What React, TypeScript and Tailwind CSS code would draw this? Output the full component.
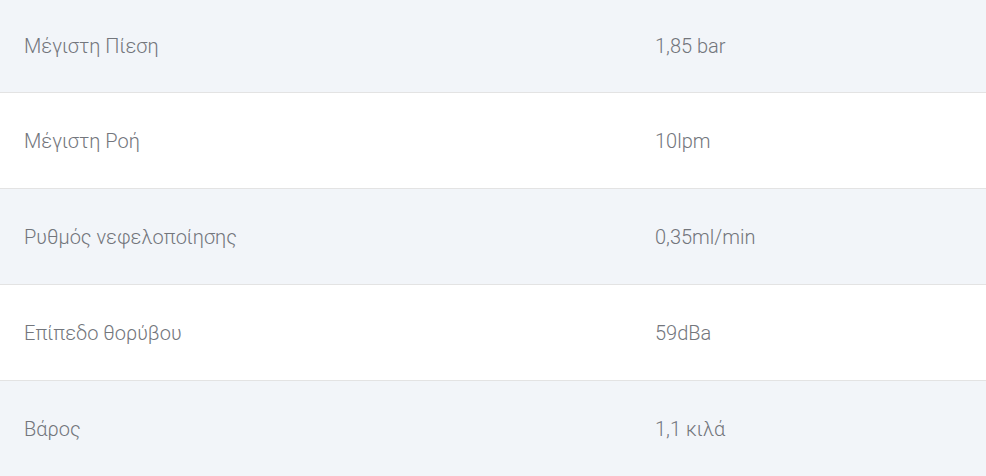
import React from "react";

const rows: [string, string][] = [
  ["Μέγιστη Πίεση", "1,85 bar"],
  ["Μέγιστη Ροή", "10lpm"],
  ["Ρυθμός νεφελοποίησης", "0,35ml/min"],
  ["Επίπεδο θορύβου", "59dBa"],
  ["Βάρος", "1,1 κιλά"],
];

export default function App() {
  return (
    <div className="w-[986px] h-[476px] bg-white overflow-hidden" style={{ fontFamily: "Roboto, 'Liberation Sans', sans-serif" }}>
      {rows.map(([k, v], i) => (
        <div
          key={k}
          className={`flex items-center border-b border-[#e3e3e3] text-[20px] font-light text-[#73767c] ${i % 2 === 0 ? "bg-[#f2f5f9]" : "bg-white"} ${i === 0 ? "h-[93px]" : "h-[96px]"}`}
        >
          <div className="w-[655px] pl-[24px]">{k}</div>
          <div>{v}</div>
        </div>
      ))}
    </div>
  );
}
